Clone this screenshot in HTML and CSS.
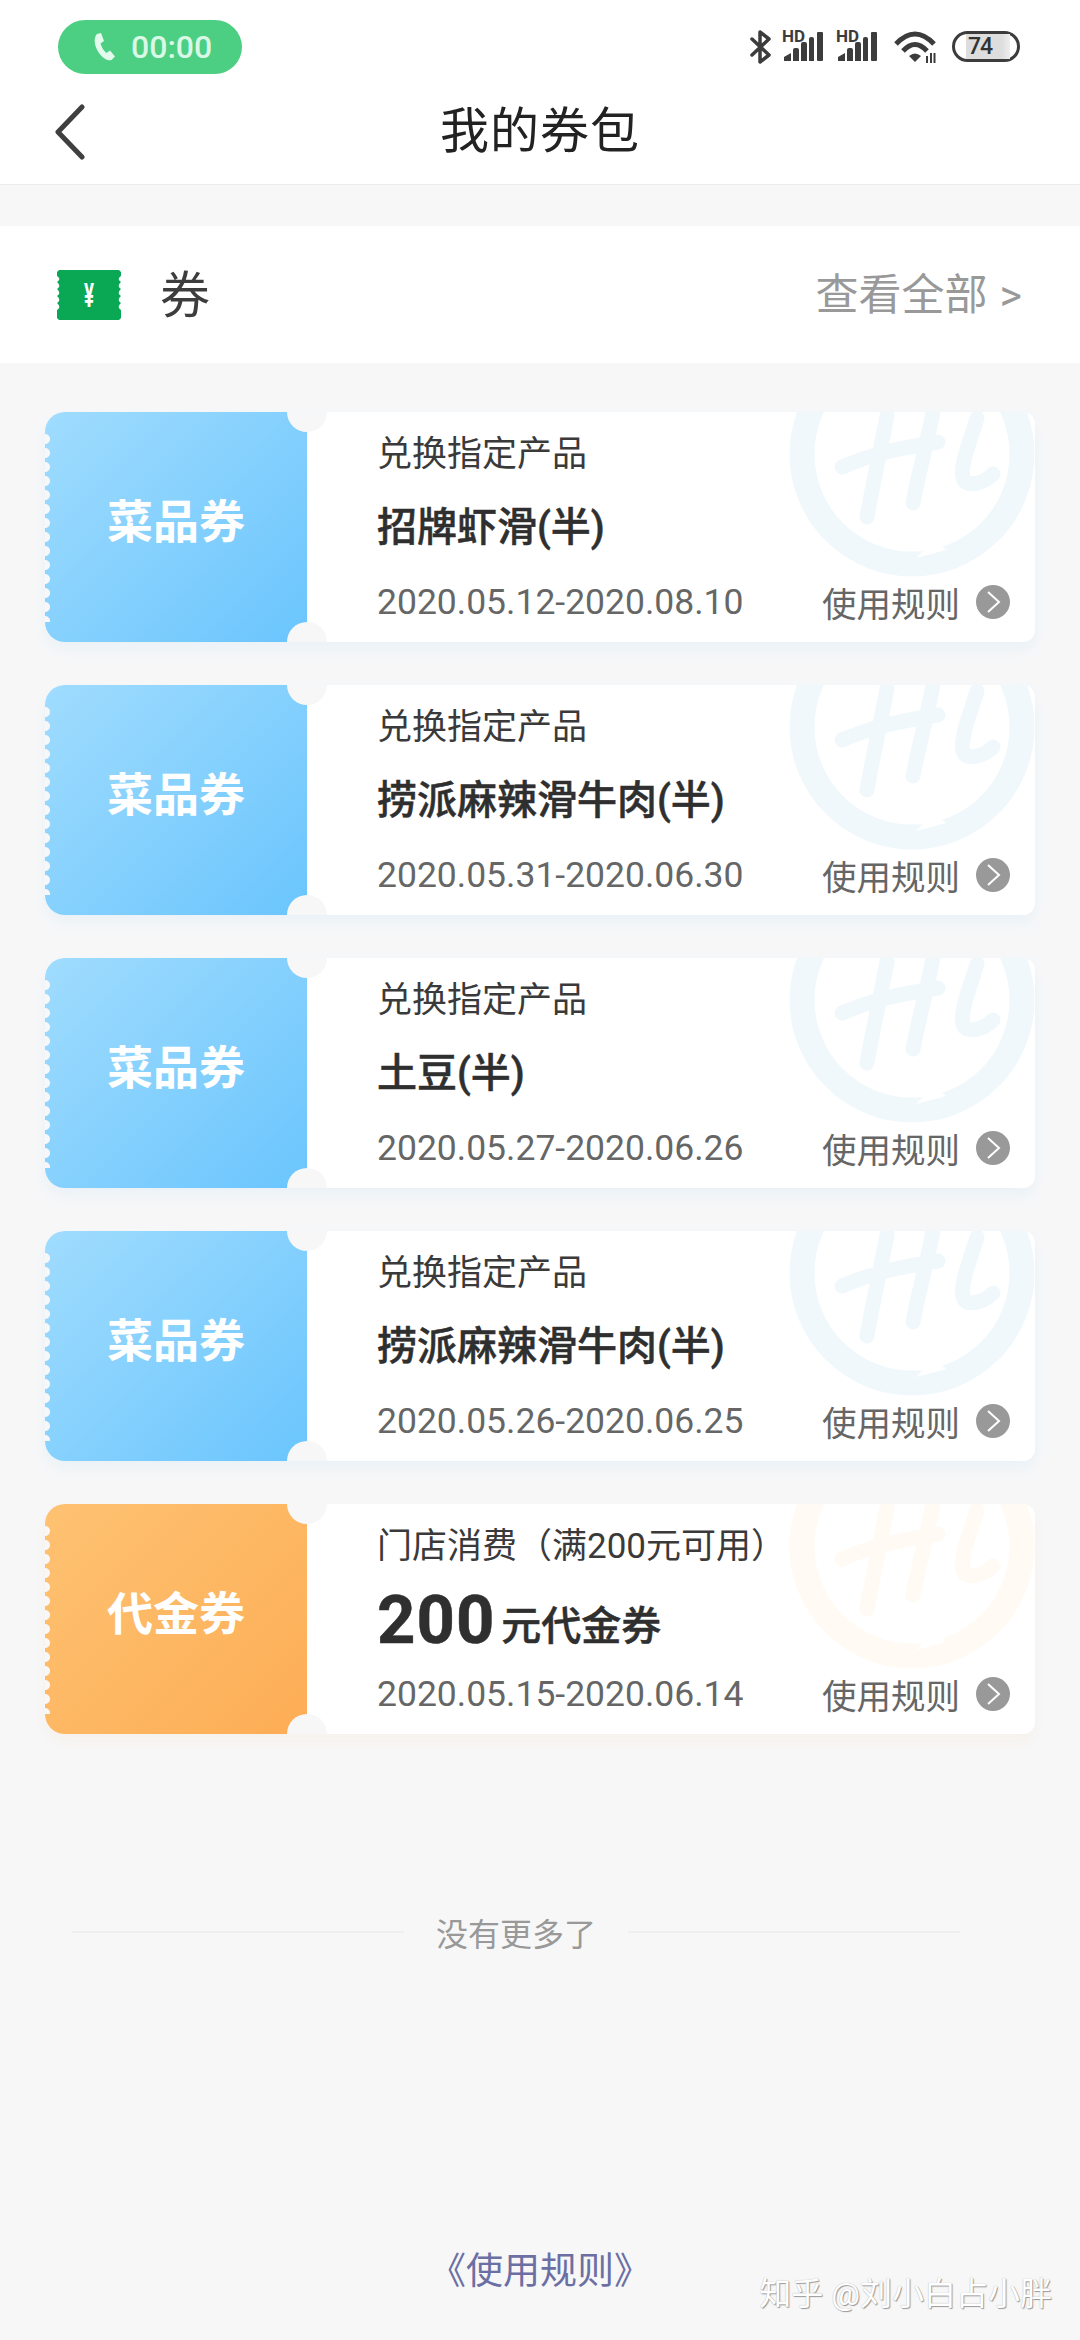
FILE: index.html
```html
<!DOCTYPE html>
<html lang="zh-CN">
<head>
    <meta charset="UTF-8">
    <meta name="viewport" content="width=device-width, initial-scale=1.0">
    <title>我的券包</title>
    <link rel="stylesheet" href="styles.css">
</head>
<body>

    <!-- Shared shapes -->
    <svg class="defs" width="0" height="0">
        <symbol id="logo" viewBox="0 0 250 170">
            <circle cx="124" cy="42" r="110" fill="none" stroke="currentColor" stroke-width="25"/>
            <path d="M128 146L158 138L146 128Z" fill="#fff"/>
            <path d="M99 4C92 40 84 76 79 105M145 0C138 36 130 64 125 91M54 55C80 44 100 38 150 30M189 6C182 30 172 52 175 66C177 76 195 72 205 62" fill="none" stroke="currentColor" stroke-width="15" stroke-linecap="round"/>
        </symbol>
        <symbol id="signal" viewBox="0 0 42 32">
            <path d="M2 31V27L9 23V31ZM11 31V20Q11 18 13 18H15Q17 18 17 20V31ZM19 31V14Q19 12 21 12H23Q25 12 25 14V31ZM27 31V9Q27 7 29 7H30Q32 7 32 9V31Z"/>
            <rect x="35" y="2" width="6" height="29" rx="1"/>
        </symbol>
    </svg>

    <!-- Header -->
    <header class="top">
        <div class="status-bar">
            <div class="call-pill">
                <svg class="call-icon" viewBox="0 0 24 28"><path d="M5 1L9 0L12 8L8.5 10.5C9.5 14 11.500 17.500 14.500 20L18 17.500L23 23.500L19.500 27C16 28.500 10 25 6 18.500C2 12 1.500 4.500 5 1Z"/></svg>
                <span>00:00</span>
            </div>
            <div class="status-icons">
                <svg class="bt-icon" viewBox="0 0 22 34"><path d="M2 9L19 25L10 32V2L19 9L2 25" fill="none" stroke="#3c3c3c" stroke-width="3.500" stroke-linejoin="round" stroke-linecap="round"/></svg>
                <div class="net"><span class="hd">HD</span><svg class="bars"><use href="#signal"/></svg></div>
                <div class="net net-low"><span class="hd">HD</span><svg class="bars"><use href="#signal"/></svg></div>
                <svg class="wifi-icon" viewBox="0 0 42 32"><path d="M2 13Q21 -7 40 13" fill="none" stroke="#3c3c3c" stroke-width="5"/><path d="M9 20Q21 7 33 20" fill="none" stroke="#3c3c3c" stroke-width="5"/><path d="M15 25Q21 20 27 25L21 31Z" fill="#3c3c3c"/><path d="M33 25V32M37 22V32M40.500 22V32" stroke="#3c3c3c" stroke-width="2"/></svg>
                <div class="battery"><span class="battery-num">74</span></div>
            </div>
        </div>
        <nav class="nav">
            <svg class="back-icon" viewBox="0 0 32 56"><path d="M28 3L4 28L28 53" fill="none" stroke="#3f3f3f" stroke-width="5" stroke-linecap="round" stroke-linejoin="round"/></svg>
            <h1 class="nav-title">我的券包</h1>
        </nav>
    </header>

    <!-- Section row -->
    <section class="section-row">
        <svg class="ticket-icon" viewBox="0 0 64 50">
            <path d="M2 0H62L64 2V6C61 8 61 10 64 12C61 15 61 17 64 19C61 22 61 24 64 26C61 29 61 31 64 33C61 36 61 38 64 40V48L62 50H2L0 48V40C3 38 3 36 0 33C3 31 3 29 0 26C3 24 3 22 0 19C3 17 3 15 0 12C3 10 3 8 0 6V2Z" fill="#0aa854"/>
            <text transform="translate(32 37) scale(0.72 1.3)" text-anchor="middle" class="ticket-yen">¥</text>
        </svg>
        <span class="section-name">券</span>
        <span class="section-more">查看全部<i class="more-arrow">&gt;</i></span>
    </section>

    <!-- Coupons -->
    <main class="coupon-list">
        <div class="coupon">
            <div class="coupon-stub">菜品券</div>
            <div class="coupon-body">
                <svg class="coupon-logo"><use href="#logo"/></svg>
                <p class="coupon-desc">兑换指定产品</p>
                <p class="coupon-name">招牌虾滑(半)</p>
                <div class="coupon-foot">
                    <span class="coupon-date">2020.05.12-2020.08.10</span>
                    <span class="coupon-rule">使用规则<svg class="rule-arrow" viewBox="0 0 34 34"><circle cx="17" cy="17" r="17" fill="#999"/><path d="M12 7L23 17L12 27" fill="none" stroke="#fff" stroke-width="2"/></svg></span>
                </div>
            </div>
        </div>

        <div class="coupon">
            <div class="coupon-stub">菜品券</div>
            <div class="coupon-body">
                <svg class="coupon-logo"><use href="#logo"/></svg>
                <p class="coupon-desc">兑换指定产品</p>
                <p class="coupon-name">捞派麻辣滑牛肉(半)</p>
                <div class="coupon-foot">
                    <span class="coupon-date">2020.05.31-2020.06.30</span>
                    <span class="coupon-rule">使用规则<svg class="rule-arrow" viewBox="0 0 34 34"><circle cx="17" cy="17" r="17" fill="#999"/><path d="M12 7L23 17L12 27" fill="none" stroke="#fff" stroke-width="2"/></svg></span>
                </div>
            </div>
        </div>

        <div class="coupon">
            <div class="coupon-stub">菜品券</div>
            <div class="coupon-body">
                <svg class="coupon-logo"><use href="#logo"/></svg>
                <p class="coupon-desc">兑换指定产品</p>
                <p class="coupon-name">土豆(半)</p>
                <div class="coupon-foot">
                    <span class="coupon-date">2020.05.27-2020.06.26</span>
                    <span class="coupon-rule">使用规则<svg class="rule-arrow" viewBox="0 0 34 34"><circle cx="17" cy="17" r="17" fill="#999"/><path d="M12 7L23 17L12 27" fill="none" stroke="#fff" stroke-width="2"/></svg></span>
                </div>
            </div>
        </div>

        <div class="coupon">
            <div class="coupon-stub">菜品券</div>
            <div class="coupon-body">
                <svg class="coupon-logo"><use href="#logo"/></svg>
                <p class="coupon-desc">兑换指定产品</p>
                <p class="coupon-name">捞派麻辣滑牛肉(半)</p>
                <div class="coupon-foot">
                    <span class="coupon-date">2020.05.26-2020.06.25</span>
                    <span class="coupon-rule">使用规则<svg class="rule-arrow" viewBox="0 0 34 34"><circle cx="17" cy="17" r="17" fill="#999"/><path d="M12 7L23 17L12 27" fill="none" stroke="#fff" stroke-width="2"/></svg></span>
                </div>
            </div>
        </div>

        <div class="coupon coupon-cash">
            <div class="coupon-stub">代金券</div>
            <div class="coupon-body">
                <svg class="coupon-logo"><use href="#logo"/></svg>
                <p class="coupon-desc">门店消费（满200元可用）</p>
                <p class="coupon-name"><b class="cash-amount">200</b>元代金券</p>
                <div class="coupon-foot">
                    <span class="coupon-date">2020.05.15-2020.06.14</span>
                    <span class="coupon-rule">使用规则<svg class="rule-arrow" viewBox="0 0 34 34"><circle cx="17" cy="17" r="17" fill="#999"/><path d="M12 7L23 17L12 27" fill="none" stroke="#fff" stroke-width="2"/></svg></span>
                </div>
            </div>
        </div>
    </main>

    <!-- Footer -->
    <div class="no-more">
        <span class="no-more-line"></span>
        <span>没有更多了</span>
        <span class="no-more-line"></span>
    </div>
    <a class="rules-link" href="#">《使用规则》</a>
    <div class="watermark">知乎 @刘小白占小胖</div>

</body>
</html>
```

FILE: styles.css
```css
/* Page */
body {
    position: relative;
    height: 2340px;
    margin: 0;
    overflow: hidden;
    background-color: #f7f7f8;
    color: #333;
    font-family: Roboto, "Noto Sans CJK SC", sans-serif;
}

p {
    margin: 0;
}

.defs {
    position: absolute;
}

/* Header */
.top {
    height: 184px;
    background-color: #fff;
    border-bottom: 1px solid #ececec;
}

.status-bar {
    display: flex;
    justify-content: space-between;
    padding: 20px 60px 0 58px;
}

.call-pill {
    display: flex;
    align-items: center;
    gap: 15px;
    width: 184px;
    height: 54px;
    padding-left: 34px;
    box-sizing: border-box;
    border-radius: 27px;
    background-color: #4ccf82;
    color: #d9f8e5;
    font-size: 32px;
    font-weight: 500;
}

.call-icon {
    width: 24px;
    height: 28px;
    fill: #e3fbec;
}

.status-icons {
    display: flex;
    align-items: flex-start;
    height: 46px;
    padding-top: 10px;
}

.bt-icon {
    width: 22px;
    height: 34px;
    margin-right: 10px;
}

.net {
    position: relative;
    width: 42px;
    height: 32px;
    margin-right: 12px;
    fill: #3c3c3c;
}

.hd {
    position: absolute;
    top: -3px;
    left: 0;
    color: #3c3c3c;
    font-size: 17px;
    font-weight: 700;
    line-height: 18px;
}

.bars {
    display: block;
    width: 42px;
    height: 32px;
}

.net-low .bars rect {
    fill: #ccc;
}

.wifi-icon {
    width: 42px;
    height: 32px;
    margin: 1px 16px 0 4px;
}

.battery {
    display: flex;
    justify-content: center;
    width: 68px;
    height: 31px;
    margin-top: 1px;
    box-sizing: border-box;
    border: 3px solid #3c3c3c;
    border-radius: 16px;
    color: #333;
    font-size: 23px;
    font-weight: 500;
    line-height: 25px;
}

.battery-num {
    padding: 0 18px 0 2px;
    margin-right: -4px;
    background: linear-gradient(90deg, #ddd 80%, #eee);
    letter-spacing: -1px;
}

/* Title row */
.nav {
    display: grid;
    grid-template-columns: 1fr auto 1fr;
    align-items: center;
    height: 111px;
    box-sizing: border-box;
}

.back-icon {
    width: 32px;
    height: 56px;
    margin-left: 54px;
}

.nav-title {
    margin: 0 0 10px;
    color: #222;
    font-size: 49px;
    font-weight: 400;
    letter-spacing: 1px;
}

/* Section row */
.section-row {
    display: flex;
    align-items: center;
    height: 137px;
    margin-top: 41px;
    padding: 0 58px 0 57px;
    background-color: #fff;
}

.ticket-icon {
    width: 64px;
    height: 50px;
    margin-right: 39px;
}

.ticket-yen {
    fill: #fff;
    font-size: 26px;
    font-weight: 700;
}

.section-name {
    flex: 1;
    margin-bottom: 8px;
    color: #3d3d3d;
    font-size: 50px;
}

.section-more {
    margin-bottom: 8px;
    color: #999;
    font-size: 43px;
}

.more-arrow {
    margin-left: 12px;
    font-style: normal;
    font-size: 43px;
}

/* Coupon cards */
.coupon-list {
    display: flex;
    flex-direction: column;
    gap: 43px;
    padding: 49px 45px 0;
}

.coupon {
    position: relative;
    display: flex;
    height: 230px;
    overflow: hidden;
    border-radius: 20px 12px 12px 20px;
    color: #f1f8fc;
    box-shadow: 0 8px 14px rgba(150, 210, 245, 0.12);
}

.coupon-cash {
    color: #fffaf3;
    box-shadow: 0 8px 14px rgba(245, 210, 160, 0.12);
}

/* Round bites where the stub meets the body */
.coupon::before,
.coupon::after {
    content: "";
    position: absolute;
    z-index: 1;
    left: 242px;
    width: 40px;
    height: 40px;
    border-radius: 50%;
    background-color: #f7f7f8;
}

.coupon::before {
    top: -20px;
}

.coupon::after {
    bottom: -20px;
}

.coupon-stub {
    position: relative;
    flex: 0 0 262px;
    box-sizing: border-box;
    background: linear-gradient(135deg, #a0dcfe, #6ac5fd);
    color: #fff;
    font-size: 46px;
    font-weight: 700;
    line-height: 220px;
    text-align: center;
}

.coupon-cash .coupon-stub {
    background: linear-gradient(135deg, #fec272, #fdad55);
}

/* Perforated left edge */
.coupon-stub::before {
    content: "";
    position: absolute;
    top: 20px;
    bottom: 20px;
    left: 0;
    width: 6px;
    background: radial-gradient(circle at 0 50%, #f7f7f8 4.5px, transparent 5.5px) 0 0 / 6px 14px repeat-y;
}

.coupon-body {
    position: relative;
    flex: 1;
    padding: 18px 25px 0 70px;
    background-color: #fff;
}

.coupon-logo {
    position: absolute;
    top: 0;
    right: -3px;
    width: 250px;
    height: 170px;
}

.coupon-desc {
    position: relative;
    height: 50px;
    color: #3a3a3a;
    font-size: 35px;
    line-height: 50px;
}

.coupon-name {
    position: relative;
    height: 60px;
    margin-top: 18px;
    color: #2f2f2f;
    font-size: 40px;
    font-weight: 500;
    -webkit-text-stroke: 0.5px #2f2f2f;
    line-height: 60px;
}

.cash-amount {
    margin-right: 6px;
    font-size: 67px;
    font-weight: 700;
    letter-spacing: 1px;
    vertical-align: -3px;
}

.coupon-foot {
    position: relative;
    display: flex;
    justify-content: space-between;
    align-items: center;
    height: 50px;
    margin-top: 19px;
    color: #666;
    font-size: 34.500px;
}

.coupon-date {
    font-size: 35.500px;
}

.coupon-rule {
    display: flex;
    align-items: center;
    gap: 16px;
}

.rule-arrow {
    width: 34px;
    height: 34px;
}

/* Bottom */
.no-more {
    display: flex;
    align-items: center;
    gap: 32px;
    height: 50px;
    margin: 173px 120px 0 72px;
    color: #999;
    font-size: 32px;
}

.no-more-line {
    flex: 1;
    height: 2px;
    background-color: #efefef;
}

.rules-link {
    display: block;
    height: 50px;
    margin-top: 290px;
    color: #6b6fa3;
    font-size: 37px;
    line-height: 50px;
    text-align: center;
    text-decoration: none;
}

.watermark {
    position: absolute;
    top: 2272px;
    right: 28px;
    color: #fff;
    font-size: 32px;
    line-height: 44px;
    text-shadow: 1px 1px 1px #999, 0 0 1px #aaa;
}
```
